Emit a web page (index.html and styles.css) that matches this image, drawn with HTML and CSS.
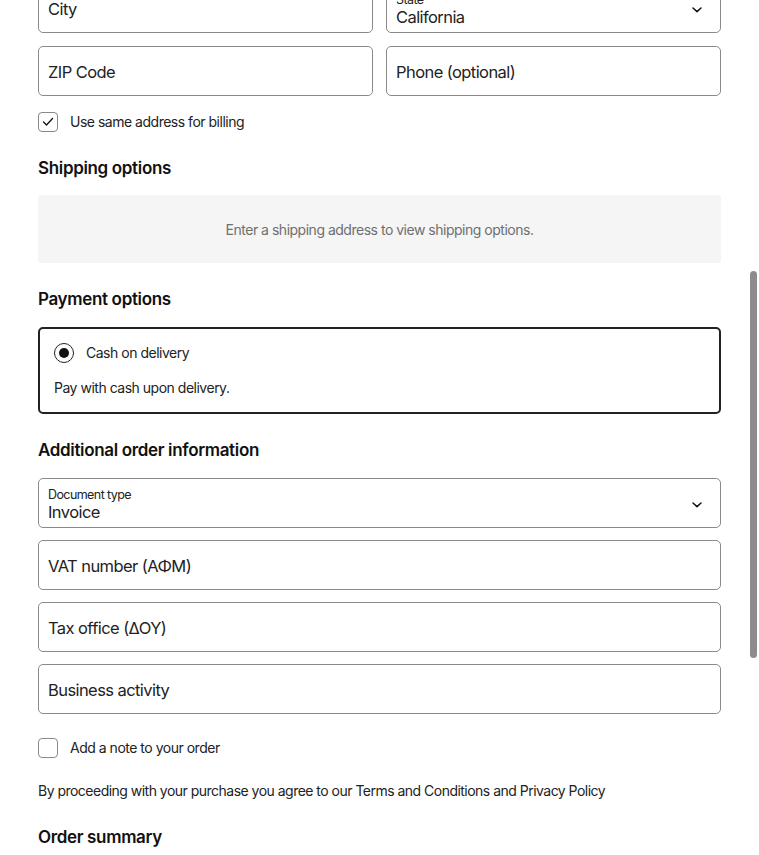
FILE: index.html
```html
<!DOCTYPE html>
<html lang="en">
<head>
<meta charset="utf-8">
<title>Checkout</title>
<link rel="stylesheet" href="styles.css">
</head>
<body>
<div class="page">
  <div class="row2">
    <div class="field"><span class="ph">City</span></div>
    <div class="field select">
      <div class="sel-text"><span class="lbl">State</span><span class="val">California</span></div>
      <svg class="chev" width="12" height="8" viewBox="0 0 12 8"><polyline points="2,2 6,5.6 10,2" fill="none" stroke="#111" stroke-width="1.5" stroke-linecap="round" stroke-linejoin="round"/></svg>
    </div>
  </div>
  <div class="row2 mt">
    <div class="field"><span class="ph">ZIP Code</span></div>
    <div class="field"><span class="ph">Phone (optional)</span></div>
  </div>
  <label class="check first">
    <span class="box"><svg width="12" height="10" viewBox="0 0 12 10"><polyline points="1.5,5 4.5,8 10.5,1.5" fill="none" stroke="#111" stroke-width="1.3" stroke-linecap="round" stroke-linejoin="round"/></svg></span>
    <span class="ctext">Use same address for billing</span>
  </label>

  <h2 class="heading ship">Shipping options</h2>
  <div class="empty">Enter a shipping address to view shipping options.</div>

  <h2 class="heading">Payment options</h2>
  <div class="pay">
    <div class="pay-row"><span class="radio"><span class="dot"></span></span><span class="ctext">Cash on delivery</span></div>
    <div class="pay-desc">Pay with cash upon delivery.</div>
  </div>

  <h2 class="heading">Additional order information</h2>
  <div class="stack">
    <div class="field select">
      <div class="sel-text"><span class="lbl">Document type</span><span class="val">Invoice</span></div>
      <svg class="chev" width="12" height="8" viewBox="0 0 12 8"><polyline points="2,2 6,5.6 10,2" fill="none" stroke="#111" stroke-width="1.5" stroke-linecap="round" stroke-linejoin="round"/></svg>
    </div>
    <div class="field"><span class="ph">VAT number (ΑΦΜ)</span></div>
    <div class="field"><span class="ph">Tax office (ΔΟΥ)</span></div>
    <div class="field"><span class="ph">Business activity</span></div>
  </div>

  <label class="check second">
    <span class="box"></span>
    <span class="ctext">Add a note to your order</span>
  </label>

  <p class="terms">By proceeding with your purchase you agree to our Terms and Conditions and Privacy Policy</p>

  <h2 class="heading summary">Order summary</h2>
</div>
<div class="scrollbar"></div>
</body>
</html>
```

FILE: styles.css
```css
html, body {
  margin: 0;
  padding: 0;
  background: #fff;
  overflow: hidden;
  height: 855px;
}
body {
  font-family: Inter, "Noto Sans", sans-serif;
  color: #1a1a1a;
  position: relative;
}
.page {
  padding: 0 38px;
  margin-top: -17px;
}
.row2 {
  display: grid;
  grid-template-columns: 1fr 1fr;
  gap: 13px;
}
.mt { margin-top: 13px; }
.field {
  height: 50px;
  box-sizing: border-box;
  border: 1px solid #8a8a8a;
  border-radius: 5px;
  padding: 0 9px;
  display: flex;
  align-items: center;
  font-size: 16.5px;
  letter-spacing: -0.035em;
  color: #222;
}
.ph { padding-top: 1px; }
.select {
  justify-content: space-between;
  padding-right: 17px;
}
.sel-text {
  display: flex;
  flex-direction: column;
  padding-top: 3px;
}
.lbl {
  font-size: 12.5px;
  line-height: 14px;
  color: #222;
}
.val {
  font-size: 16.5px;
  line-height: 20px;
}
.chev { margin-top: 3px; }
.stack {
  display: flex;
  flex-direction: column;
  gap: 12px;
}
.check {
  display: flex;
  align-items: center;
  gap: 12px;
}
.first { margin-top: 16px; }
.second { margin-top: 24px; }
.box {
  width: 20px;
  height: 20px;
  box-sizing: border-box;
  border: 1px solid #8a8a8a;
  border-radius: 4px;
  display: flex;
  align-items: center;
  justify-content: center;
}
.ctext {
  font-size: 14px;
  line-height: 20px;
  letter-spacing: -0.035em;
  color: #222;
}
.heading {
  font-size: 17px;
  line-height: 24px;
  font-weight: 600;
  letter-spacing: -0.02em;
  margin: 24px 0 16px;
  color: #111;
}
.ship { margin-top: 24px; margin-bottom: 15px; }
.empty {
  height: 68px;
  background: #f5f5f5;
  border-radius: 3px;
  display: flex;
  align-items: center;
  justify-content: center;
  font-size: 14px;
  letter-spacing: -0.035em;
  color: #6f6f6f;
}
.pay {
  border: 2px solid #222;
  border-radius: 5px;
  padding: 14px 14px;
  display: flex;
  flex-direction: column;
  gap: 14px;
}
.pay-row {
  display: flex;
  align-items: center;
  gap: 12px;
}
.radio {
  width: 20px;
  height: 20px;
  box-sizing: border-box;
  border: 1.5px solid #222;
  border-radius: 50%;
  display: flex;
  align-items: center;
  justify-content: center;
}
.dot {
  width: 10px;
  height: 10px;
  border-radius: 50%;
  background: #111;
}
.pay-desc {
  font-size: 14px;
  line-height: 20px;
  letter-spacing: -0.035em;
  color: #222;
  padding-top: 1px;
}
.terms {
  margin: 23px 0 0;
  font-size: 14px;
  line-height: 20px;
  letter-spacing: -0.037em;
  color: #222;
}
.summary { margin-top: 24px; }
.scrollbar {
  position: absolute;
  left: 750px;
  top: 271px;
  width: 7px;
  height: 387px;
  border-radius: 4px;
  background: #8c8c8c;
}
```
